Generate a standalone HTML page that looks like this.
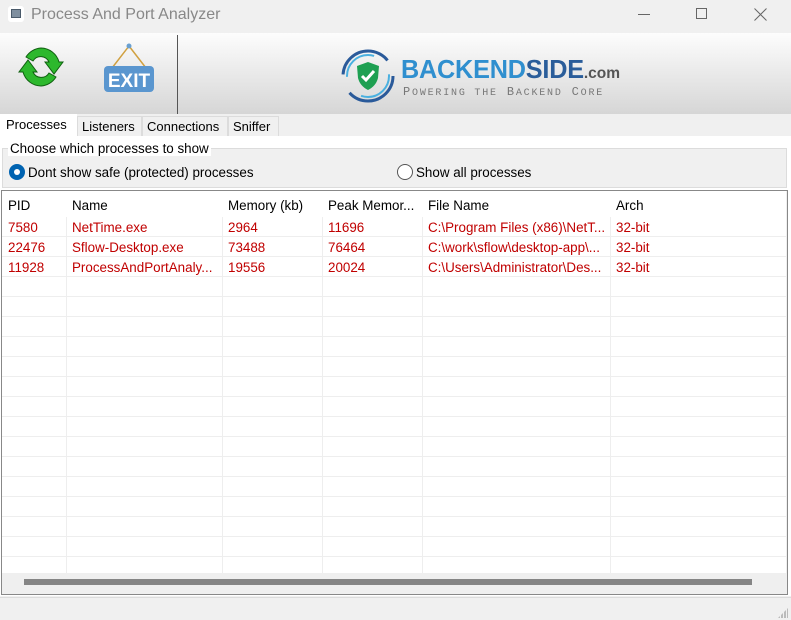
<!DOCTYPE html>
<html><head><style>
*{margin:0;padding:0;box-sizing:border-box}
body{width:791px;height:620px;background:#f0f0f0;font-family:"Liberation Sans",sans-serif;font-size:13.4px;color:#000;position:relative;overflow:hidden}
.abs{position:absolute}
#title{left:0;top:0;width:791px;height:33px;background:#f0f0f0}
#tb{left:0;top:33px;width:791px;height:81px;background:linear-gradient(#fdfdfd,#d6d6d6)}
.tab{position:absolute;top:116px;height:20px;background:#f0f0f0;border:1px solid #dcdcdc;border-bottom:none;padding:2px 4px;font-size:13px}
.grid{position:absolute;left:2px;top:191px;width:784px;height:382px;background:#fff;overflow:hidden}
.row{position:absolute;left:0;width:784px;height:20px;border-bottom:1px solid #eeeeee}
.cell{position:absolute;top:3px;white-space:nowrap}
.vl{position:absolute;top:0;width:1px;height:382px;background:#eeeeee}
.red{color:#c00000}
</style></head><body>
<div id="title" class="abs">
 <div class="abs" style="left:8px;top:6px;width:16px;height:16px;background:#fff;border-radius:3px"><div style="margin:3px;width:10px;height:9px;background:#7f8f9f;border:1px solid #4a5a6a"></div></div>
 <div class="abs" style="left:31px;top:6px;font-size:16px;color:#888">Process And Port Analyzer</div>
 <div class="abs" style="left:638px;top:14px;width:12px;height:1px;background:#666"></div>
 <div class="abs" style="left:696px;top:8px;width:11px;height:11px;border:1px solid #666"></div>
 <svg class="abs" style="left:754px;top:8px" width="13" height="13"><path d="M0.5 0.5L12.5 12.5M12.5 0.5L0.5 12.5" stroke="#666" stroke-width="1"/></svg>
</div>
<div id="tb" class="abs">
 <svg class="abs" style="left:18px;top:11px" width="46" height="46" viewBox="0 0 46 46">
  <path d="M23 4 A19 19 0 0 1 41 18 L45 18 L36 30 L27 18 L31 18 A9 9 0 0 0 15 17 L8 13 A19 19 0 0 1 23 4Z" fill="#2db82d" stroke="#106010" stroke-width="1"/>
  <path d="M23 42 A19 19 0 0 1 5 28 L1 28 L10 16 L19 28 L15 28 A9 9 0 0 0 31 29 L38 33 A19 19 0 0 1 23 42Z" fill="#2db82d" stroke="#106010" stroke-width="1"/>
 </svg>
 <svg class="abs" style="left:102px;top:9px" width="54" height="52" viewBox="0 0 54 52">
  <path d="M27 4 L10 26 M27 4 L44 26" stroke="#d0a040" stroke-width="1.5" fill="none"/>
  <circle cx="27" cy="4" r="2.5" fill="#6aa0d0"/>
  <rect x="2" y="24" width="50" height="26" rx="4" fill="#5a96cf"/>
  <text x="27" y="45" text-anchor="middle" font-family="Liberation Sans" font-weight="bold" font-size="19" fill="#fff">EXIT</text>
 </svg>
 <div class="abs" style="left:177px;top:2px;width:1px;height:79px;background:#555"></div>
 <svg class="abs" style="left:340px;top:15px" width="56" height="56" viewBox="0 0 56 56">
  <circle cx="28" cy="28" r="25" fill="none" stroke="#2a5a9a" stroke-width="3" stroke-dasharray="60 20"/>
  <circle cx="28" cy="28" r="21" fill="none" stroke="#4ab0e0" stroke-width="2" stroke-dasharray="40 25"/>
  <path d="M28 14 L39 18 L38 30 Q36 38 28 42 Q20 38 18 30 L17 18Z" fill="#1ea052"/>
  <path d="M22 28 L26 32 L34 23" stroke="#fff" stroke-width="3" fill="none"/>
 </svg>
 <div class="abs" style="left:401px;top:21px;font-size:26px;font-weight:bold;letter-spacing:-0.2px;transform:scaleX(0.97);transform-origin:left"><span style="color:#2f8fcf">BACKEND</span><span style="color:#2a5d9a">SIDE</span><span style="color:#555;font-size:16px;letter-spacing:0">.com</span></div>
 <div class="abs" style="left:403px;top:52px;font-family:'Liberation Mono',monospace;font-size:12px;color:#777;letter-spacing:1.8px">P<span style="font-size:10px">OWERING THE</span> B<span style="font-size:10px">ACKEND</span> C<span style="font-size:10px">ORE</span></div>
</div>
<div class="tab" style="left:0;top:114px;height:23px;width:77px;background:#fff;border-color:#fff;padding:2px 5px">Processes</div>
<div class="tab" style="left:77px;width:65px">Listeners</div>
<div class="tab" style="left:142px;width:86px">Connections</div>
<div class="tab" style="left:228px;width:51px">Sniffer</div>
<div class="abs" style="left:0;top:136px;width:791px;height:460px;background:#fff"></div>
<div class="abs" style="left:2px;top:148px;width:785px;height:40px;border:1px solid #dcdcdc;background:#f0f0f0"></div>
<div class="abs" style="left:8px;top:141px;background:#fff;padding:0 2px">Choose which processes to show</div>
<div class="abs" style="left:9px;top:164px;width:16px;height:16px;border-radius:50%;background:#0063b1"><div style="margin:5px;width:6px;height:6px;border-radius:50%;background:#fff"></div></div>
<div class="abs" style="left:28px;top:165px">Dont show safe (protected) processes</div>
<div class="abs" style="left:397px;top:164px;width:16px;height:16px;border-radius:50%;border:1px solid #555;background:#fff"></div>
<div class="abs" style="left:416px;top:165px">Show all processes</div>
<div class="abs" style="left:1px;top:190px;width:787px;height:405px;border:1px solid #888;background:#efefef"></div>
<div class="grid">
 <div class="vl" style="left:64px"></div><div class="vl" style="left:220px"></div><div class="vl" style="left:320px"></div><div class="vl" style="left:420px"></div><div class="vl" style="left:608px"></div>
 <div class="row" style="top:0;height:26px;background:#fff;border-bottom:none">
  <div class="cell" style="left:6px;top:7px">PID</div><div class="cell" style="left:70px;top:7px">Name</div><div class="cell" style="left:226px;top:7px">Memory (kb)</div><div class="cell" style="left:326px;top:7px">Peak Memor...</div><div class="cell" style="left:426px;top:7px">File Name</div><div class="cell" style="left:614px;top:7px">Arch</div>
 </div>
 <div class="row red" style="top:26px"><div class="cell" style="left:6px">7580</div><div class="cell" style="left:70px">NetTime.exe</div><div class="cell" style="left:226px">2964</div><div class="cell" style="left:326px">11696</div><div class="cell" style="left:426px">C:\Program Files (x86)\NetT...</div><div class="cell" style="left:614px">32-bit</div></div>
 <div class="row red" style="top:46px"><div class="cell" style="left:6px">22476</div><div class="cell" style="left:70px">Sflow-Desktop.exe</div><div class="cell" style="left:226px">73488</div><div class="cell" style="left:326px">76464</div><div class="cell" style="left:426px">C:\work\sflow\desktop-app\...</div><div class="cell" style="left:614px">32-bit</div></div>
 <div class="row red" style="top:66px"><div class="cell" style="left:6px">11928</div><div class="cell" style="left:70px">ProcessAndPortAnaly...</div><div class="cell" style="left:226px">19556</div><div class="cell" style="left:326px">20024</div><div class="cell" style="left:426px">C:\Users\Administrator\Des...</div><div class="cell" style="left:614px">32-bit</div></div>
 <div class="row" style="top:86px"></div><div class="row" style="top:106px"></div><div class="row" style="top:126px"></div><div class="row" style="top:146px"></div><div class="row" style="top:166px"></div><div class="row" style="top:186px"></div><div class="row" style="top:206px"></div><div class="row" style="top:226px"></div><div class="row" style="top:246px"></div><div class="row" style="top:266px"></div><div class="row" style="top:286px"></div><div class="row" style="top:306px"></div><div class="row" style="top:326px"></div><div class="row" style="top:346px"></div>
</div>
<div class="abs" style="left:24px;top:579px;width:728px;height:6px;background:#858585"></div>
<div class="abs" style="left:0;top:597px;width:791px;height:1px;background:#dcdcdc"></div>
<div class="abs" style="left:778px;top:608px;width:10px;height:10px;background:repeating-linear-gradient(90deg,#bbb 0 2px,transparent 2px 3px);clip-path:polygon(100% 0,100% 100%,0 100%)"></div>
</body></html>
